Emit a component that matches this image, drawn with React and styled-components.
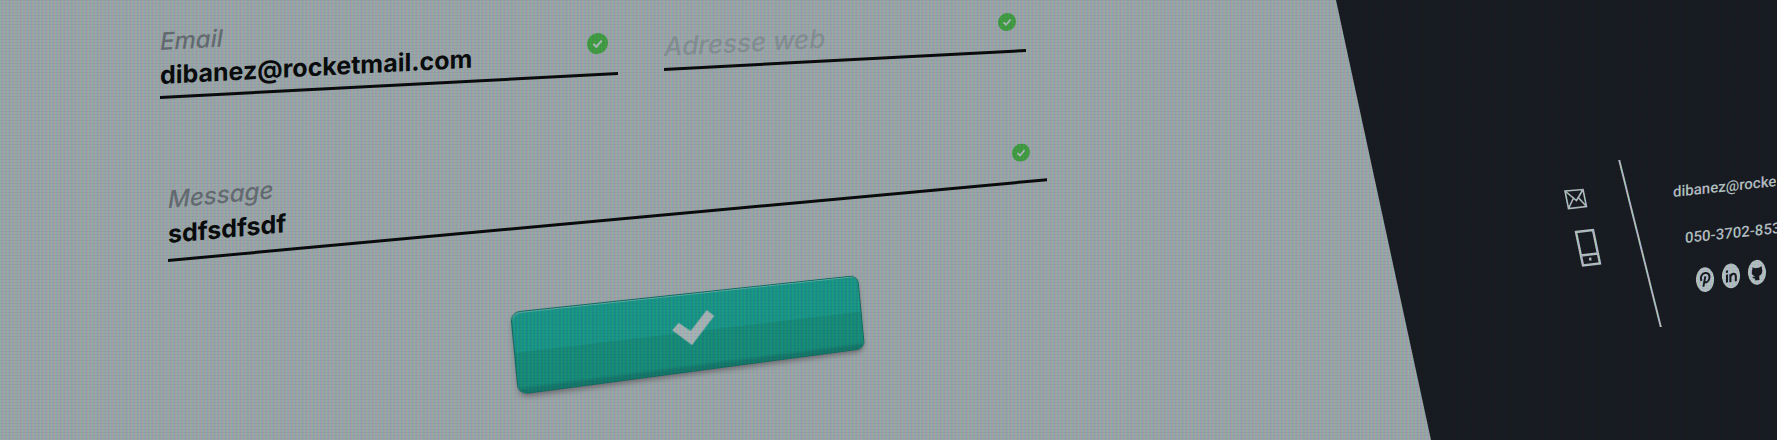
import React from "react";
import styled, { createGlobalStyle } from "styled-components";

const GlobalStyle = createGlobalStyle`
  * { box-sizing: border-box; }
  body { margin: 0; background: #b6bebd; overflow: hidden; }
  button, input { font: inherit; }
`;

const Page = styled.div`
  position: relative;
  display: grid;
  grid-template-columns: 1336fr 441fr;
  min-height: 100vh;
  overflow: hidden;
  background: #b6bebd;
  font-family: Inter, "Open Sans", sans-serif;
`;

const Scanlines = styled.div`
  position: absolute;
  inset: 0;
  pointer-events: none;
  mix-blend-mode: multiply;
  background:
    repeating-linear-gradient(180deg, rgba(0, 0, 0, 0.04) 0 1px, transparent 1px 3px),
    repeating-linear-gradient(90deg,
      #cdedd4 0 1px, #c9dcf4 1px 2px, #e2d2ec 2px 3px, #e4dcd6 3px 4px,
      #c8ead8 4px 5px, #cdd8f0 5px 6px, #e8d2e4 6px 7px,
      #d2ead0 7px 8px, #c8e0ee 8px 9px, #dcd0f0 9px 10px, #ead6d8 10px 11px);
`;

const Form = styled.form`
  padding: 28px 21.6% 0 12%;
`;

const Row = styled.div`
  display: grid;
  grid-template-columns: 458fr 362fr;
  align-items: start;
  gap: 46px;
  margin-right: 22px;
`;

const Field = styled.div`
  position: relative;
  display: flex;
  flex-direction: column;
  transform: skewY(${(p) => p.$tilt}deg);
  transform-origin: 0 100%;
`;

const MessageField = styled(Field)`
  margin: 87px 0 0 8px;
`;

const Label = styled.label`
  font-size: 24px;
  line-height: 28px;
  font-style: italic;
  font-weight: 500;
  color: #777c7f;
`;

const Input = styled.input`
  width: 100%;
  padding: ${(p) => (p.$roomy ? "6px 0 11px" : "5px 0 7px")};
  border: 0;
  border-bottom: 3px solid #0b0d0e;
  border-radius: 0;
  background: transparent;
  font-size: 25px;
  line-height: 28px;
  height: ${(p) => (p.$roomy ? 48 : 43)}px;
  font-weight: 700;
  color: #0b0d0e;
  outline: 0;
  &::placeholder {
    color: #9ca4a6;
    opacity: 1;
    font-size: 26px;
    font-style: italic;
    font-weight: 500;
  }
`;

const Badge = styled.svg`
  position: absolute;
  right: ${(p) => p.$inset}px;
  bottom: 22px;
  width: ${(p) => p.$size}px;
  height: ${(p) => p.$size}px;
`;

const Submit = styled.button`
  display: flex;
  align-items: center;
  justify-content: center;
  width: 348px;
  height: 83px;
  margin: 50px 0 0 39.4%;
  padding: 0 6px 10px 0;
  border: 1px solid #177a6c;
  border-radius: 9px;
  background: linear-gradient(#1fab97 0 49%, #1c9f88 50% 91%, #198977 96%);
  box-shadow: inset 1px 2px 0 -1px #6cc4b8, 0 4px 6px -2px rgba(80, 65, 70, 0.6);
  transform-origin: 0 0;
  transform: matrix3d(1.1218, -0.1193, 0, 0.00035, 0.0964, 1, 0, 0, 0, 0, 1, 0, 0, 0, 0, 1);
`;

const Aside = styled.aside`
  display: flex;
  align-items: flex-start;
  min-width: 0;
  overflow: hidden;
  padding: 160px 0 0 228px;
  background: #1c1f25;
  color: #d2dad9;
  clip-path: polygon(0 0, 100% 0, 100% 100%, 95px 100%);
`;

const Icons = styled.div`
  display: flex;
  flex: none;
  flex-direction: column;
  gap: 18px;
  width: 38px;
  padding-top: 28px;
`;

const PhoneIcon = styled.svg`
  margin-left: 10px;
`;

const Divider = styled.div`
  flex: none;
  width: 2px;
  height: 167px;
  margin: 0 32px 0 37px;
  background: currentColor;
  transform: skewX(14deg);
`;

const Contacts = styled.div`
  flex: none;
  padding-top: 20px;
`;

const ContactLine = styled.a`
  display: block;
  margin: 0 0 22px ${(p) => p.$indent}px;
  font-family: Roboto, sans-serif;
  font-size: 15px;
  line-height: 24px;
  font-weight: 500;
  white-space: nowrap;
  color: inherit;
  text-decoration: none;
  transform: skewY(-6deg);
  transform-origin: 0 100%;
`;

const Social = styled.nav`
  display: flex;
  gap: 6px;
  margin: -4px 0 0 22px;
  transform: skewY(-8deg);
  transform-origin: 0 50%;
`;

const SocialLink = styled.a`
  display: block;
  width: 20px;
  height: 26px;
  color: inherit;
`;

function CheckBadge({ size, inset = 10 }) {
  return (
    <Badge $size={size} $inset={inset} viewBox="0 0 20 20" aria-hidden="true">
      <circle cx="10" cy="10" r="10" fill="#4db34c" />
      <path d="M6 10.2 9 13 14 7.4" fill="none" stroke="#c8d4cf" strokeWidth="2" />
    </Badge>
  );
}

function Disc({ children }) {
  return (
    <svg width="20" height="26" viewBox="0 0 20 26" aria-hidden="true">
      <ellipse cx="10" cy="13" rx="9" ry="12.5" fill="currentColor" transform="rotate(-8 10 13)" />
      {children}
    </svg>
  );
}

export default function App() {
  return (
    <Page>
      <GlobalStyle />
      <Form onSubmit={(e) => e.preventDefault()}>
        <Row>
          <Field $tilt={-3}>
            <Label htmlFor="email">Email</Label>
            <Input id="email" type="email" defaultValue="dibanez@rocketmail.com" />
            <CheckBadge size={21} />
          </Field>
          <Field $tilt={-3}>
            <Input id="web" type="text" aria-label="Adresse web" placeholder="Adresse web" />
            <CheckBadge size={18} />
          </Field>
        </Row>
        <MessageField $tilt={-5.25}>
          <Label htmlFor="message">Message</Label>
          <Input id="message" type="text" $roomy defaultValue="sdfsdfsdf" />
          <CheckBadge size={18} inset={17} />
        </MessageField>
        <Submit type="submit" aria-label="Envoyer">
          <svg width="44" height="40" viewBox="0 0 44 40" aria-hidden="true">
            <path d="M0 20 7 13 18 23 36 3 43 10 18 38Z" fill="#c2cdca" />
          </svg>
        </Submit>
      </Form>
      <Aside>
        <Icons>
          <svg width="24" height="22" viewBox="0 0 24 22" fill="none" stroke="currentColor" strokeWidth="1.6" aria-hidden="true">
            <path d="M1 3 19 1.5 22.5 18.5 4.5 20.5ZM1 3 12.5 12.5 19 1.5M4.5 20.5 9.5 10M22.5 18.5 14.5 9.8" />
          </svg>
          <PhoneIcon width="28" height="40" viewBox="0 0 28 40" fill="none" stroke="currentColor" strokeWidth="2.4" aria-hidden="true">
            <path d="M2 4 19 2 26 35.5 9 37.5ZM7 27.5 24 25.5" />
            <path d="M15 31.2 17.4 31" strokeWidth="2.8" />
          </PhoneIcon>
        </Icons>
        <Divider />
        <Contacts>
          <ContactLine $indent={0} href="mailto:dibanez@rocketmail.com">dibanez@rocke</ContactLine>
          <ContactLine $indent={12} href="tel:0503702853">050-3702-853</ContactLine>
          <Social>
            <SocialLink href="#pinterest" aria-label="Pinterest">
              <Disc>
                <path d="M6.4 14C4.8 10 6.7 6.5 10 6.5 13.7 6.5 15 9.3 14.3 12.5 13.5 16.3 10.3 16.8 9.5 14.5M10.3 9.8 8.4 20" fill="none" stroke="#1c1f25" strokeWidth="2" />
              </Disc>
            </SocialLink>
            <SocialLink href="#linkedin" aria-label="LinkedIn">
              <Disc>
                <path d="M6 11V19M6 7V9.4M9.4 19V11M9.4 14C9.8 10.4 14.8 10.2 14.8 14V19" fill="none" stroke="#1c1f25" strokeWidth="2.1" />
              </Disc>
            </SocialLink>
            <SocialLink href="#github" aria-label="GitHub">
              <Disc>
                <path d="M5.5 7.3 8 8.8H12L14.5 7.3 15 10.4C16 14 14.3 16.3 12.2 16.8L12.5 21H8.2L8 19C6.4 19 6 17.8 5.2 17L8 17 8 16.6C5 16 4.2 13 5.2 10.4Z" fill="#1c1f25" />
              </Disc>
            </SocialLink>
          </Social>
        </Contacts>
      </Aside>
      <Scanlines />
    </Page>
  );
}
